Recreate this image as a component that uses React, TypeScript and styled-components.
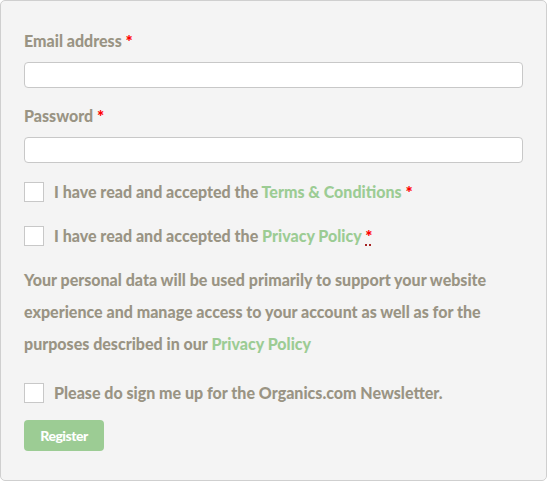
import styled, { createGlobalStyle } from "styled-components";

const GlobalStyle = createGlobalStyle`
  html, body {
    margin: 0;
    padding: 0;
    background: #ffffff;
  }
  body {
    font-family: Lato, "Open Sans", sans-serif;
  }
  * {
    box-sizing: border-box;
  }
`;

const textColor = "#9a9484";
const green = "#9ccc94";

export default function App() {
  return (
    <>
      <GlobalStyle />
      <RegisterForm onSubmit={(e) => e.preventDefault()}>
        <Field>
          <Label htmlFor="reg-email">
            Email address <Required>*</Required>
          </Label>
          <TextInput id="reg-email" type="email" />
        </Field>
        <Field>
          <Label htmlFor="reg-password">
            Password <Required>*</Required>
          </Label>
          <TextInput id="reg-password" type="password" />
        </Field>

        <CheckRow>
          <Box type="checkbox" />
          <span>
            I have read and accepted the <GreenLink href="#">Terms &amp; Conditions</GreenLink>{" "}
            <Required>*</Required>
          </span>
        </CheckRow>
        <CheckRow>
          <Box type="checkbox" />
          <span>
            I have read and accepted the <GreenLink href="#">Privacy Policy</GreenLink>{" "}
            <Required as="abbr" title="required" $dotted>
              *
            </Required>
          </span>
        </CheckRow>

        <PrivacyText>
          Your personal data will be used primarily to support your website experience and manage
          access to your account as well as for the purposes described in our{" "}
          <GreenLink href="#">Privacy Policy</GreenLink>
        </PrivacyText>

        <CheckRow $last>
          <Box type="checkbox" />
          <span>Please do sign me up for the Organics.com Newsletter.</span>
        </CheckRow>

        <RegisterButton type="submit">Register</RegisterButton>
      </RegisterForm>
    </>
  );
}

const RegisterForm = styled.form`
  width: 547px;
  height: 481px;
  margin: 0;
  padding: 28px 24px 28px 23px;
  background: #f4f4f4;
  border: 1px solid #cfcfcf;
  border-radius: 5px;
  display: flex;
  flex-direction: column;
  color: ${textColor};
  font-weight: 900;
  font-size: 16px;
`;

const Field = styled.div`
  display: flex;
  flex-direction: column;
  gap: 9px;
  margin-bottom: 16px;
  &:nth-of-type(2) {
    margin-bottom: 19px;
  }
`;

const Label = styled.label`
  display: block;
  line-height: 24px;
  font-size: 16px;
  font-weight: 900;
  color: ${textColor};
`;

const Required = styled.span<{ $dotted?: boolean }>`
  color: #ff0000;
  font-weight: 900;
  font-size: 17px;
  line-height: 0;
  vertical-align: -1px;
  text-decoration: ${(p) => (p.$dotted ? "underline dotted" : "none")};
  text-decoration-color: #990000;
  text-underline-offset: 2px;
  cursor: help;
`;

const TextInput = styled.input`
  display: block;
  width: 499px;
  height: 26px;
  margin: 0;
  padding: 0 8px;
  border: 1px solid #c8c8c8;
  border-radius: 4px;
  background: #ffffff;
  font-family: inherit;
  font-size: 14px;
  outline: none;
`;

const CheckRow = styled.label<{ $last?: boolean }>`
  display: flex;
  align-items: center;
  gap: 10px;
  height: 20px;
  margin-bottom: ${(p) => (p.$last ? "17px" : "24px")};
  font-size: 16px;
  line-height: 20px;
  color: ${textColor};
  white-space: nowrap;
`;

const Box = styled.input`
  appearance: none;
  -webkit-appearance: none;
  flex: none;
  width: 20px;
  height: 20px;
  margin: 0;
  background: #ffffff;
  border: 1px solid #c8c8c8;
  border-radius: 0;
  &:checked {
    background: ${green};
  }
`;

const GreenLink = styled.a`
  color: ${green};
  text-decoration: none;
`;

const PrivacyText = styled.p`
  margin: -6px 0 23px;
  font-size: 16px;
  line-height: 32px;
  color: ${textColor};
`;

const RegisterButton = styled.button`
  align-self: flex-start;
  width: 80px;
  height: 31px;
  padding: 0;
  border: none;
  border-radius: 4px;
  background: ${green};
  color: #ffffff;
  font-family: Lato, sans-serif;
  font-weight: 900;
  font-size: 14px;
  letter-spacing: -0.5px;
  cursor: pointer;
`;
